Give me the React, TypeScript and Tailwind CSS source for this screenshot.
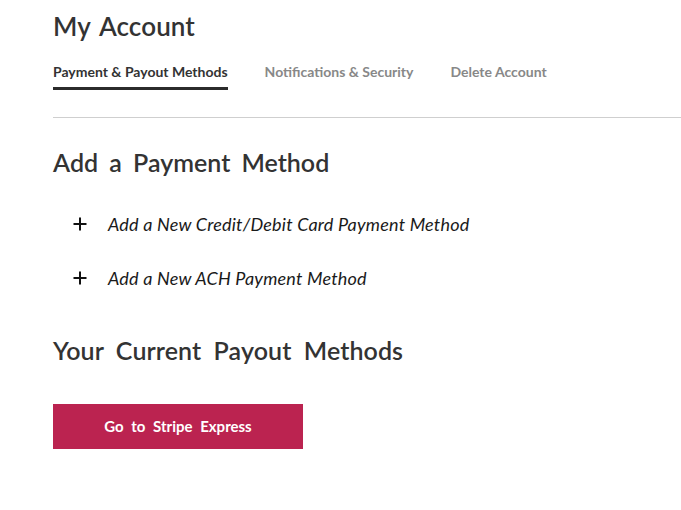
export default function App() {
  return (
    <div className="min-h-[510px] w-[681px] bg-white text-[#333]" style={{ fontFamily: "Lato, 'Open Sans', sans-serif" }}>
      <div className="pl-[53px]">
        <h1 className="pt-[10px] text-[26px] font-semibold leading-[32px] tracking-[0.1px] [word-spacing:3px]">My Account</h1>
        <div className="mt-[21px] flex gap-[37px] text-[14px] font-bold">
          <div className="border-b-[3px] border-[#2b2b2b] pb-[6px] leading-[18px] text-[#333]">Payment &amp; Payout Methods</div>
          <div className="leading-[18px] text-[#888]">Notifications &amp; Security</div>
          <div className="leading-[18px] text-[#888]">Delete Account</div>
        </div>
        <div className="mt-[27px] h-px bg-[#cfcfcf]" />
        <h2 className="mt-[29px] text-[25px] font-semibold leading-[30px] [word-spacing:5px]">Add a Payment Method</h2>
        <div className="mt-[36px] flex flex-col gap-[32px] pl-[20px]">
          {["Add a New Credit/Debit Card Payment Method", "Add a New ACH Payment Method"].map((t) => (
            <div key={t} className="flex items-center gap-[21px] text-[#1a1a1a]">
              <svg width="14" height="14" viewBox="0 0 14 14" className="shrink-0">
                <path d="M7 0.5V13.5M0.5 7H13.5" stroke="#111" strokeWidth="2" />
              </svg>
              <span className="text-[18px] italic leading-[22px] tracking-[0.2px]">{t}</span>
            </div>
          ))}
        </div>
        <h2 className="mt-[46px] text-[25px] font-semibold leading-[30px] tracking-[0.1px] [word-spacing:6px]">Your Current Payout Methods</h2>
        <button className="mt-[39px] flex h-[45px] w-[250px] items-center justify-center bg-[#bb2350] text-[15px] font-bold text-white [word-spacing:4px]">
          Go to Stripe Express
        </button>
      </div>
    </div>
  );
}
